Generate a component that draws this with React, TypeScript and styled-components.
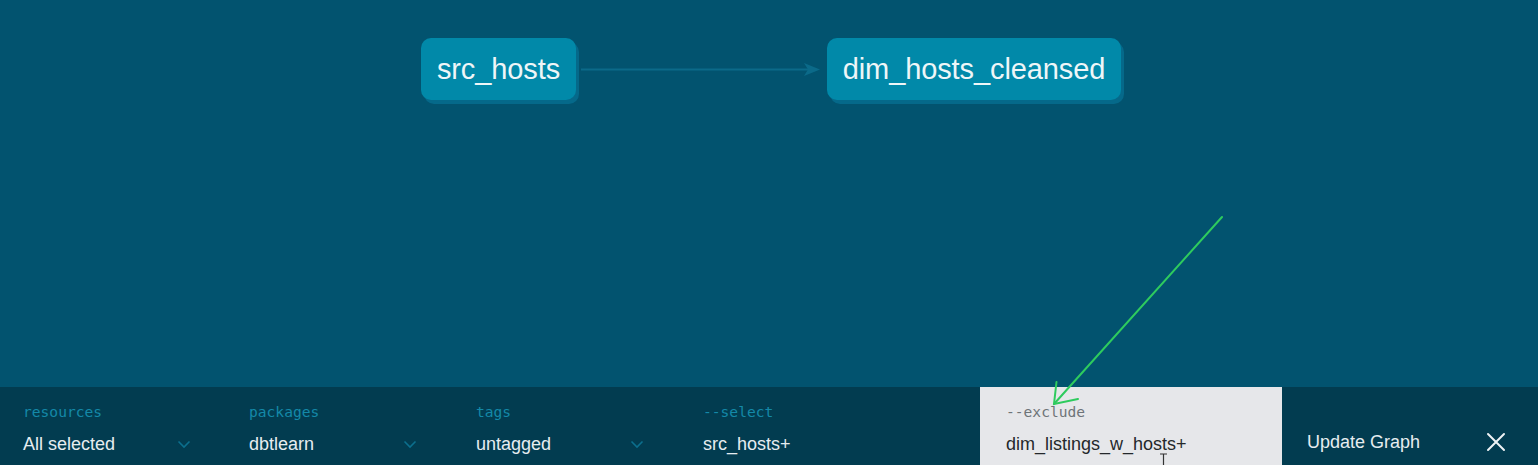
import React from "react";
import styled, { createGlobalStyle } from "styled-components";

const Global = createGlobalStyle`
  html, body { margin: 0; padding: 0; background: #02536f; overflow: hidden; }
  * { box-sizing: border-box; }
`;

const Page = styled.div`
  width: 1538px;
  height: 465px;
  display: flex;
  flex-direction: column;
  background: #02536f;
  font-family: "Liberation Sans", Arial, sans-serif;
`;

const Canvas = styled.div`
  position: relative;
  height: 387px;
  flex: none;
`;

const Node = styled.div<{ $x: number; $w: number }>`
  position: absolute;
  left: ${(p) => p.$x}px;
  top: 38px;
  width: ${(p) => p.$w}px;
  height: 62px;
  border-radius: 10px;
  background: #0189a9;
  box-shadow: 3px 4px 0 #05698a;
  color: #eef6f8;
  font-size: 29px;
  display: flex;
  align-items: center;
  justify-content: center;
  letter-spacing: -0.1px;
`;

const Overlay = styled.svg`
  position: absolute;
  left: 0;
  top: 0;
  overflow: visible;
  pointer-events: none;
`;

const Bar = styled.div`
  flex: 1;
  background: #023c50;
  display: flex;
  align-items: stretch;
  padding-left: 23px;
`;

const Filter = styled.div<{ $w: number }>`
  width: ${(p) => p.$w}px;
  display: flex;
  flex-direction: column;
  padding-top: 16px;
`;

const Label = styled.div<{ $light?: boolean }>`
  font-family: "DejaVu Sans Mono", "Liberation Mono", monospace;
  font-size: 14.6px;
  line-height: 17px;
  color: ${(p) => (p.$light ? "#6e7478" : "#1489a8")};
  height: 17px;
`;

const ValueRow = styled.div`
  display: flex;
  align-items: center;
  justify-content: space-between;
  width: 168px;
  margin-top: 13px;
  height: 22px;
`;

const Value = styled.span<{ $dark?: boolean }>`
  font-size: 18px;
  color: ${(p) => (p.$dark ? "#24282b" : "#e6edf0")};
  white-space: nowrap;
`;

const Exclude = styled.div`
  position: relative;
  width: 302px;
  background: #e6e7ea;
  padding: 16px 0 0 26px;
  display: flex;
  flex-direction: column;
`;

const Cursor = styled.svg`
  position: absolute;
  left: 179px;
  top: 66px;
`;

const Actions = styled.div`
  flex: 1;
  display: flex;
  align-items: center;
  padding: 32px 32px 0 25px;
  justify-content: space-between;
`;

const UpdateButton = styled.span`
  font-size: 18px;
  color: #e6edf0;
`;

const Chevron = () => (
  <svg width="14" height="9" viewBox="0 0 14 9">
    <path d="M1.5 1.5 L7 7 L12.5 1.5" fill="none" stroke="#0c6f8d" strokeWidth="1.6" />
  </svg>
);

const Close = () => (
  <svg width="20" height="20" viewBox="0 0 20 20">
    <path d="M2 2 L18 18 M18 2 L2 18" stroke="#eef3f5" strokeWidth="2" strokeLinecap="round" />
  </svg>
);

const filters = [
  { label: "resources", value: "All selected", w: 226 },
  { label: "packages", value: "dbtlearn", w: 227 },
  { label: "tags", value: "untagged", w: 227 },
];

export default function App() {
  return (
    <>
      <Global />
      <Page>
        <Canvas>
          <Overlay width="1538" height="387">
            <line x1="581" y1="69.5" x2="808" y2="69.5" stroke="#0b6a89" strokeWidth="2" />
            <path d="M804 63 L820 69.5 L804 76 L808 69.5 Z" fill="#0b6a89" />
          </Overlay>
          <Node $x={421} $w={155}>src_hosts</Node>
          <Node $x={827} $w={294}>dim_hosts_cleansed</Node>
        </Canvas>
        <Bar>
          {filters.map((f) => (
            <Filter key={f.label} $w={f.w}>
              <Label>{f.label}</Label>
              <ValueRow>
                <Value>{f.value}</Value>
                <Chevron />
              </ValueRow>
            </Filter>
          ))}
          <Filter $w={277}>
            <Label>--select</Label>
            <ValueRow>
              <Value>src_hosts+</Value>
            </ValueRow>
          </Filter>
          <Exclude>
            <Label $light>--exclude</Label>
            <ValueRow>
              <Value $dark>dim_listings_w_hosts+</Value>
            </ValueRow>
            <Cursor width="9" height="12" viewBox="0 0 9 12">
              <path d="M1 1 H8 M4.5 1 V12" stroke="#333" strokeWidth="1.2" fill="none" />
            </Cursor>
          </Exclude>
          <Actions>
            <UpdateButton>Update Graph</UpdateButton>
            <Close />
          </Actions>
        </Bar>
        <Overlay width="1538" height="465" style={{ position: "absolute" }}>
          <g stroke="#2ecb5e" strokeWidth="2" fill="none" strokeLinecap="round">
            <line x1="1222" y1="217" x2="1054" y2="404" />
            <path d="M1056.5 382 L1054 404 L1078 399" />
          </g>
        </Overlay>
      </Page>
    </>
  );
}
